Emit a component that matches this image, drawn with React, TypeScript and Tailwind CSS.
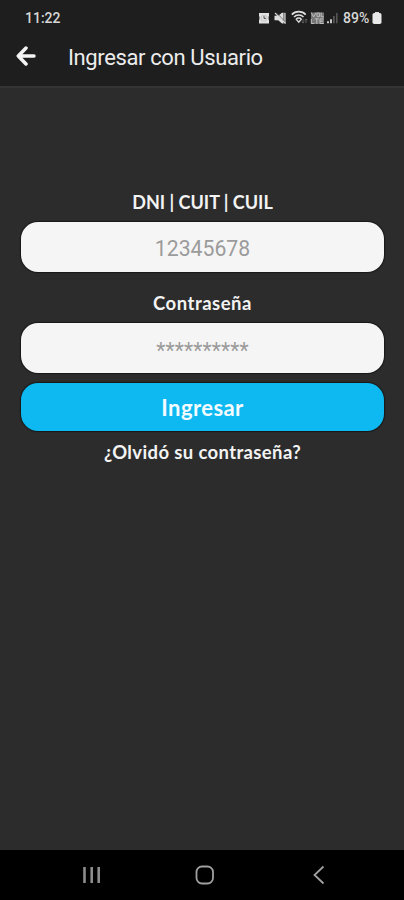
import { useState } from "react";
import type { ReactNode } from "react";

const heading = "font-['Lato','Open_Sans',sans-serif] font-bold whitespace-nowrap";

function AlarmIcon() {
  return (
    <svg width="12" height="12" viewBox="0 0 12 12">
      <path d="M1 1h10v3l-.4.5v3l.4.5v3.5H1V8l.4-.5v-3L1 4z" fill="#e2e2e2" />
      <circle cx="6" cy="6.2" r="3" fill="none" stroke="#b8b8b8" strokeWidth="0.7" />
      <path d="M6 4.2v2.2h1.8" fill="none" stroke="#444" strokeWidth="1" />
    </svg>
  );
}

function MuteIcon() {
  return (
    <svg width="13" height="12" viewBox="0 0 13 12">
      <path d="M0.5 3.8h3.7L8 .8h1.3v10.7H8L4.2 8.3H.5z" fill="#dedede" />
      <path d="M9.3 0.8h2.5v10.5H9.3z" fill="#a6a6a6" />
      <path d="M2.8 1l8.7 9.3" stroke="#4a4a4a" strokeWidth="0.8" />
      <path d="M1 1l10.5 10.5" stroke="#d8d8d8" strokeWidth="1.1" />
    </svg>
  );
}

function WifiIcon() {
  return (
    <svg width="17" height="14" viewBox="0 0 17 14" fill="none">
      <path d="M.8 4.6C4.3.6 11.2.6 14.7 4.6" stroke="#dedede" strokeWidth="1.6" />
      <path d="M3 7.1C5.2 4.4 10.3 4.4 12.5 7.1" stroke="#dedede" strokeWidth="1.5" />
      <path d="M5.2 9.2c1.2-1.6 3.9-1.6 5.1 0L7.8 12.2z" stroke="#dedede" strokeWidth="1.3" />
      <path d="M12 9v4M10.8 11.7l1.2 1.4 1.2-1.4M15 13V9M13.8 10.3L15 9l1.2 1.3" stroke="#666" strokeWidth="0.9" />
    </svg>
  );
}

function VolteIcon() {
  return (
    <svg width="15" height="14" viewBox="0 0 15 14" fill="none">
      <path d="M1 1.5h13V13H1z" fill="#777" />
      <path d="M1.2 1.5L3.6 6 6 1.5M7 2h2.6v3.4H7zM11.2 1.5v4.3h2.6M1.3 8v4.5h3M4.8 7.8h4M6.8 7.8V13M13.5 8H10v4.5h3.7M10 10.2h3" stroke="#bcbcbc" strokeWidth="1" />
    </svg>
  );
}

function SignalIcon() {
  return (
    <svg width="11" height="12" viewBox="0 0 11 12">
      <path d="M0 9.2h2v2H0zM3 7.2h2v4H3z" fill="#c6c6c6" />
      <path d="M6 4h1.8v7.2H6zM9 1h1.6v10.2H9z" fill="#555" />
    </svg>
  );
}

function StatusBar() {
  return (
    <div className="flex h-9 pl-[25px] text-[14px] leading-[36px] font-medium text-[#d8d8d8]">
      <span className="w-[233px]">11:22</span>
      <span className="mt-3 w-4"><AlarmIcon /></span>
      <span className="mt-3 w-[17px]"><MuteIcon /></span>
      <span className="mt-[10px] w-[19px]"><WifiIcon /></span>
      <span className="mt-[11px] w-[17px]"><VolteIcon /></span>
      <span className="mt-3 w-4"><SignalIcon /></span>
      <span className="w-[29px]">89%</span>
      <svg width="10" height="13" viewBox="0 0 10 13" className="mt-3">
        <path d="M3 0h4v1.2H3z" fill="#ddd" />
        <rect x="0.5" y="1" width="9" height="11" rx="1.8" fill="#e8e8e8" />
      </svg>
    </div>
  );
}

function TopBar() {
  return (
    <div className="flex h-[43px] items-center pl-4">
      <svg width="20" height="20" viewBox="0 0 20 20" fill="none" className="mb-[3px] shrink-0">
        <path d="M10 2L2.3 10l7.7 8M2.5 10H18" stroke="#f4f4f4" strokeWidth="3.5" strokeLinecap="round" strokeLinejoin="round" />
      </svg>
      <h1 className="ml-8 text-[22px] leading-none tracking-[-0.38px] whitespace-nowrap text-[#ececec]">Ingresar con Usuario</h1>
    </div>
  );
}

function Label({ children, className }: { children: ReactNode; className: string }) {
  return <label className={`${heading} ${className} block text-center leading-6 text-[#f3f3f3]`}>{children}</label>;
}

interface FieldProps {
  value:       string;
  onChange:    (value: string) => void;
  placeholder: string;
  type?:       string;
  className?:  string;
}

function Field({ value, onChange, placeholder, type = "text", className = "" }: FieldProps) {
  return (
    <input
      type={type}
      value={value}
      onChange={(e) => onChange(e.target.value)}
      placeholder={placeholder}
      className={`${className} mt-2 block h-[50px] w-full rounded-[17px] bg-[#f5f5f5] text-center text-[21.2px] text-[#333] shadow-[0_0_1px_1px_#181818] outline-none placeholder:text-[#9b9b9b]`}
    />
  );
}

export default function App() {
  const [user, setUser]         = useState("");
  const [password, setPassword] = useState("");

  return (
    <div className="flex h-[900px] w-[404px] flex-col overflow-hidden bg-[#2c2c2c] font-['Roboto',sans-serif]">
      <header className="h-[86px] shrink-0 bg-[#1e1e1e]">
        <StatusBar />
        <TopBar />
      </header>

      <main className="flex-1 border-t-2 border-[#343434] pr-5 pl-[21px] pt-[102px]">
        <Label className="text-[18px]">DNI | CUIT | CUIL</Label>
        <Field value={user} onChange={setUser} placeholder="12345678" className="pt-0.5" />
        <Label className="mt-[19px] text-[18.5px] tracking-[0.5px]">Contraseña</Label>
        <Field value={password} onChange={setPassword} placeholder="**********" type="password" className="pt-1 tracking-[0.15px]" />
        <button className={`${heading} mt-[10px] block h-12 w-full rounded-[17px] bg-[#0db9f0] text-[22px] tracking-[0.4px] text-[#f3fbff] shadow-[0_0_1px_1px_#181818]`}>
          Ingresar
        </button>
        <a className={`${heading} mt-[9px] block text-center text-[18.5px] leading-6 tracking-[0.37px] text-[#f3f3f3]`}>¿Olvidó su contraseña?</a>
      </main>

      <nav className="flex h-[50px] shrink-0 items-center bg-black pl-[82px]">
        <svg width="20" height="18" viewBox="0 0 20 18" stroke="#8c8c8c" strokeWidth="2.6">
          <path d="M2.5 1v16M9.7 1v16M16.7 1v16" />
        </svg>
        <svg width="20" height="20" viewBox="0 0 20 20" fill="none" className="ml-[93px]">
          <rect x="1.5" y="1.5" width="16.5" height="17" rx="5.5" stroke="#a0a0a0" strokeWidth="1.8" />
        </svg>
        <svg width="14" height="20" viewBox="0 0 14 20" fill="none" className="ml-[97px]">
          <path d="M11.5 1.5L2.5 10l9 8.5" stroke="#a0a0a0" strokeWidth="1.8" />
        </svg>
      </nav>
    </div>
  );
}
